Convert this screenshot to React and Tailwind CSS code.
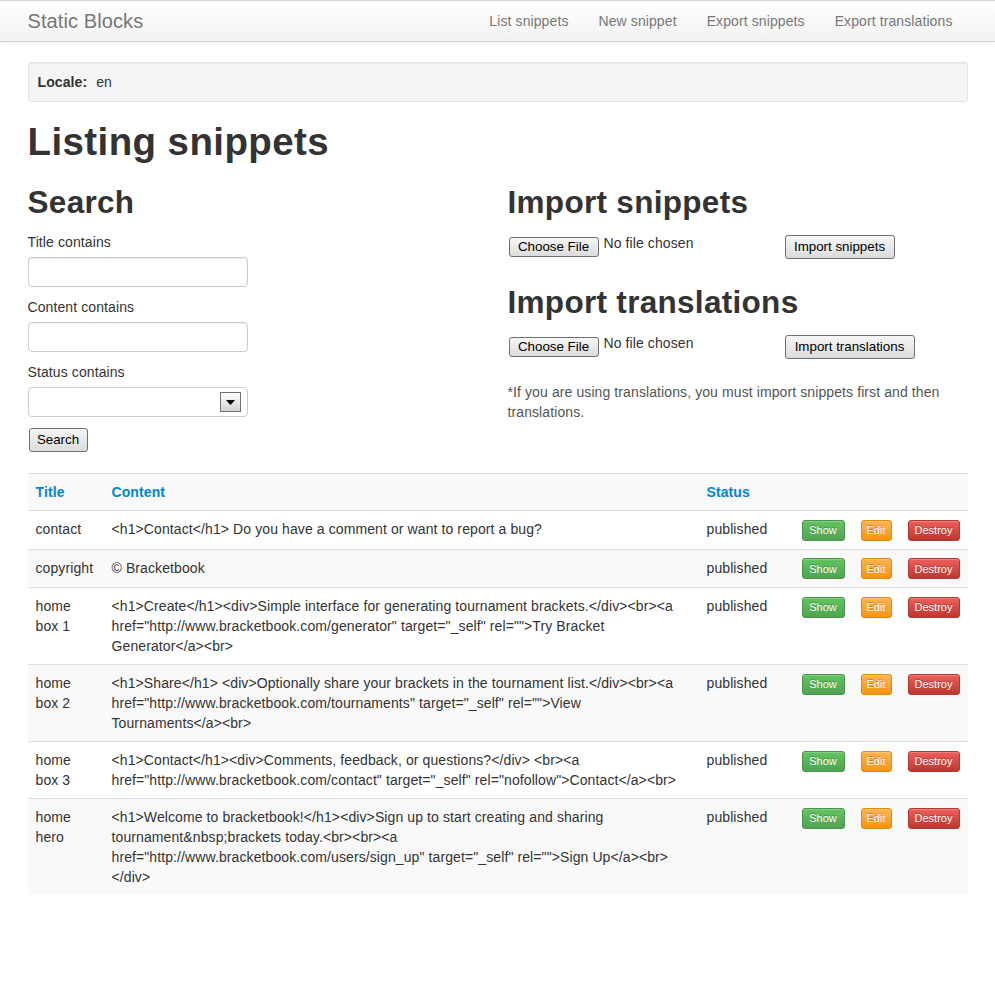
import React from 'react';

const navLinks = ['List snippets', 'New snippet', 'Export snippets', 'Export translations'];

const snippets = [
  { title: 'contact', content: '<h1>Contact</h1> Do you have a comment or want to report a bug?', status: 'published' },
  { title: 'copyright', content: '© Bracketbook', status: 'published' },
  {
    title: 'home box 1',
    content: '<h1>Create</h1><div>Simple interface for generating tournament brackets.</div><br><a href="http://www.bracketbook.com/generator" target="_self" rel="">Try Bracket Generator</a><br>',
    status: 'published',
  },
  {
    title: 'home box 2',
    content: '<h1>Share</h1> <div>Optionally share your brackets in the tournament list.</div><br><a href="http://www.bracketbook.com/tournaments" target="_self" rel="">View Tournaments</a><br>',
    status: 'published',
  },
  {
    title: 'home box 3',
    content: '<h1>Contact</h1><div>Comments, feedback, or questions?</div> <br><a href="http://www.bracketbook.com/contact" target="_self" rel="nofollow">Contact</a><br>',
    status: 'published',
  },
  {
    title: 'home hero',
    content: '<h1>Welcome to bracketbook!</h1><div>Sign up to start creating and sharing tournament&nbsp;brackets today.<br><br><a href="http://www.bracketbook.com/users/sign_up" target="_self" rel="">Sign Up</a><br></div>',
    status: 'published',
  },
];

const nativeBtn =
  'inline-flex items-center justify-center border border-[#707070] rounded-[3px] bg-linear-to-b from-[#f6f6f6] to-[#dcdcdc] text-[13.33px] text-black leading-none tracking-normal';

const miniBtn =
  'inline-flex items-center justify-center h-[21px] rounded-[3px] border text-[11px] text-white tracking-normal [text-shadow:0_-1px_0_rgba(0,0,0,0.25)] shadow-[inset_0_1px_0_rgba(255,255,255,0.2)]';

const FileRow = ({ label, width }) => (
  <div className="flex items-start h-[26px] ml-[1px]">
    <div className="flex items-start w-[276px]">
      <button className={`${nativeBtn} mt-[4px] h-[20px] w-[90px]`}>Choose File</button>
      <span className="ml-[5px] leading-[20px]">No file chosen</span>
    </div>
    <button className={`${nativeBtn} mt-[2px] h-[24px] ${width}`}>{label}</button>
  </div>
);

export default function App() {
  return (
    <div className="min-h-screen bg-white text-[14px] leading-[20px] tracking-[0.1px] text-[#333] font-['Liberation_Sans',Arial,sans-serif]">
      <div className="h-[42px] border-t border-b border-[#d4d4d4] bg-linear-to-b from-white to-[#f2f2f2] shadow-[0_1px_4px_rgba(0,0,0,0.065)]">
        <div className="w-[940px] mx-auto flex items-center h-full">
          <span className="text-[20px] text-[#777]">Static Blocks</span>
          <nav className="ml-auto flex">
            {navLinks.map((l) => (
              <a key={l} className="px-[15px] text-[#777]">{l}</a>
            ))}
          </nav>
        </div>
      </div>

      <div className="w-[940px] mx-auto">
        <div className="mt-[20px] h-[40px] px-[9px] flex items-center bg-[#f5f5f5] border border-[#e3e3e3] rounded-[3px] shadow-[inset_0_1px_1px_rgba(0,0,0,0.05)]">
          <b className="font-bold">Locale:</b>
          <span className="ml-[9px]">en</span>
        </div>

        <h1 className="mt-[20px] text-[38.5px] leading-[40px] font-bold tracking-[0.4px]">Listing snippets</h1>

        <div className="mt-[20px] flex">
          <div className="w-[480px]">
            <h2 className="text-[31.5px] leading-[40px] font-bold tracking-[0.3px]">Search</h2>
            <div className="mt-[10px]">
              <label className="block mb-[5px]">Title contains</label>
              <input className="block w-[220px] h-[30px] border border-[#ccc] rounded-[4px] mb-[10px] shadow-[inset_0_1px_1px_rgba(0,0,0,0.075)]" />
              <label className="block mb-[5px]">Content contains</label>
              <input className="block w-[220px] h-[30px] border border-[#ccc] rounded-[4px] mb-[10px] shadow-[inset_0_1px_1px_rgba(0,0,0,0.075)]" />
              <label className="block mb-[5px]">Status contains</label>
              <div className="flex items-center justify-end w-[220px] h-[30px] border border-[#ccc] rounded-[4px] mb-[10px] pr-[6px]">
                <div className="w-[21px] h-[20px] border border-[#707070] bg-linear-to-b from-white to-[#d4d4d4] flex items-center justify-center">
                  <svg width="9" height="5" viewBox="0 0 9 5">
                    <polygon points="0,0 9,0 4.5,5" fill="#000" />
                  </svg>
                </div>
              </div>
              <button className={`${nativeBtn} ml-[1px] mt-[1px] h-[24px] w-[59px]`}>Search</button>
            </div>
          </div>

          <div className="w-[460px]">
            <h2 className="text-[31.5px] leading-[40px] font-bold tracking-[0.3px]">Import snippets</h2>
            <div className="mt-[11px]">
              <FileRow label="Import snippets" width="w-[110px]" />
            </div>
            <h2 className="mt-[23px] text-[31.5px] leading-[40px] font-bold tracking-[0.3px]">Import translations</h2>
            <div className="mt-[11px]">
              <FileRow label="Import translations" width="w-[130px]" />
            </div>
            <p className="mt-[23px] w-[440px] text-[#555]">
              *If you are using translations, you must import snippets first and then translations.
            </p>
          </div>
        </div>

        <table className="mt-[21px] w-[940px] table-fixed border-collapse">
          <colgroup>
            <col className="w-[76px]" />
            <col className="w-[595px]" />
            <col className="w-[95px]" />
            <col className="w-[59px]" />
            <col className="w-[47px]" />
            <col className="w-[68px]" />
          </colgroup>
          <tbody>
            <tr className="bg-[#f9f9f9]">
              <th className="p-[8px] text-left align-top border-t border-[#ddd] text-[#0088cc] font-bold">Title</th>
              <th className="p-[8px] text-left align-top border-t border-[#ddd] text-[#0088cc] font-bold">Content</th>
              <th className="p-[8px] text-left align-top border-t border-[#ddd] text-[#0088cc] font-bold">Status</th>
              <th className="p-[8px] border-t border-[#ddd]"></th>
              <th className="p-[8px] border-t border-[#ddd]"></th>
              <th className="p-[8px] border-t border-[#ddd]"></th>
            </tr>
            {snippets.map((s, i) => (
              <tr key={s.title} className={i % 2 === 1 ? 'bg-[#f9f9f9]' : 'bg-white'}>
                <td className="p-[8px] align-top border-t border-[#ddd]">{s.title}</td>
                <td className="p-[8px] align-top border-t border-[#ddd] break-words">{s.content}</td>
                <td className="p-[8px] align-top border-t border-[#ddd]">{s.status}</td>
                <td className="p-[8px] align-top border-t border-[#ddd]">
                  <a className={`${miniBtn} w-[43px] bg-linear-to-b from-[#62c462] to-[#51a351] border-[#4a944a]`}>Show</a>
                </td>
                <td className="p-[8px] align-top border-t border-[#ddd]">
                  <a className={`${miniBtn} w-[31px] bg-linear-to-b from-[#fbb450] to-[#f89406] border-[#e08a0a]`}>Edit</a>
                </td>
                <td className="p-[8px] align-top border-t border-[#ddd]">
                  <a className={`${miniBtn} w-[52px] bg-linear-to-b from-[#ee5f5b] to-[#bd362f] border-[#b23a34]`}>Destroy</a>
                </td>
              </tr>
            ))}
          </tbody>
        </table>
      </div>
    </div>
  );
}
